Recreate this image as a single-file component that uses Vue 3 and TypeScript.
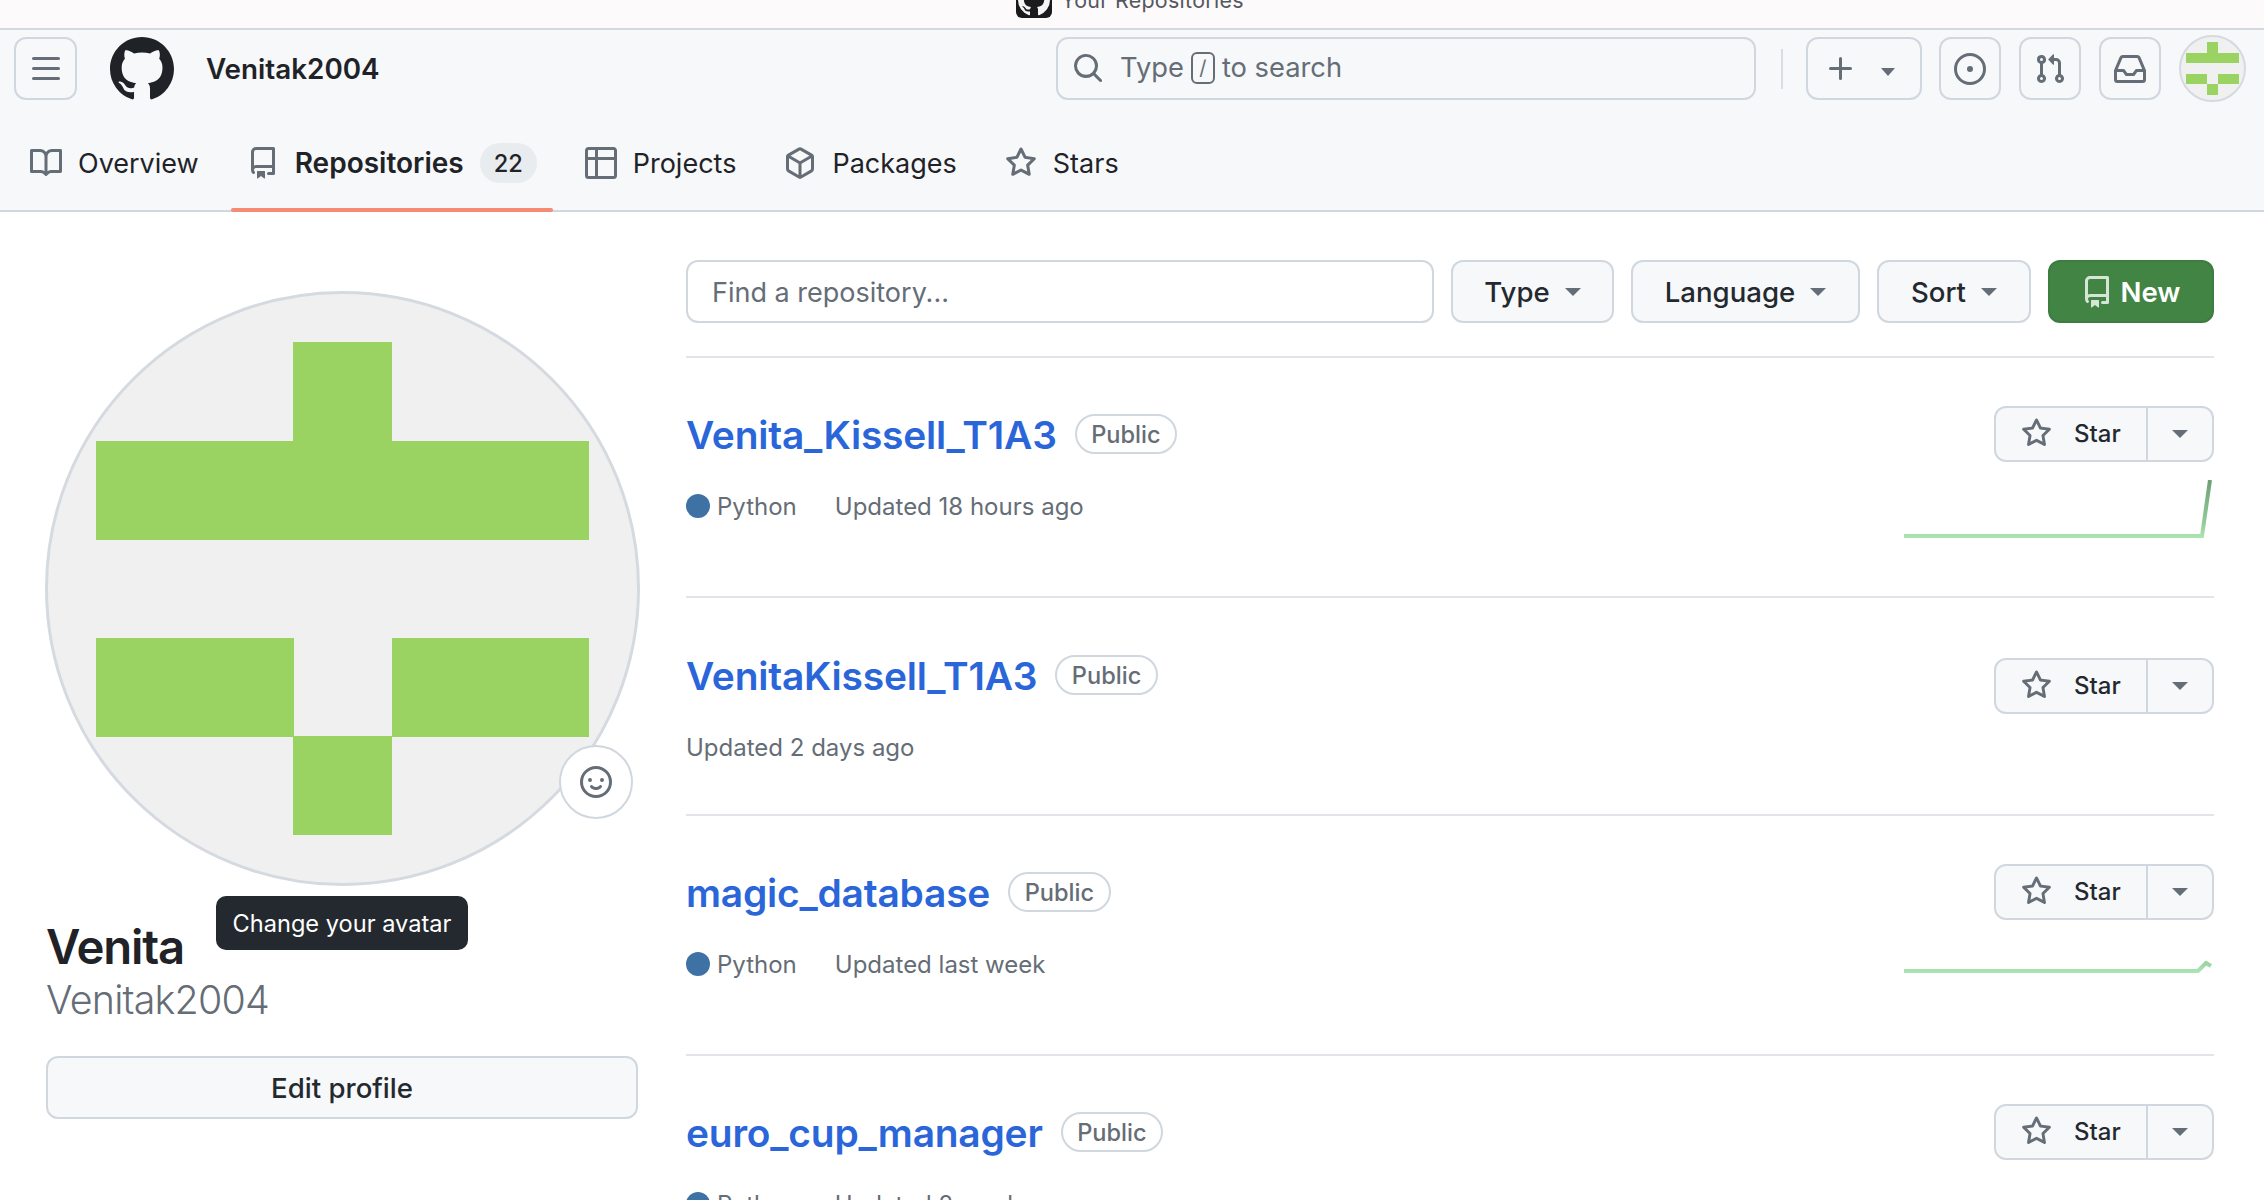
<script setup lang="ts">
const ic = {
  mark: 'M8 0c4.42 0 8 3.58 8 8a8.013 8.013 0 0 1-5.45 7.59c-.4.08-.55-.17-.55-.38 0-.27.01-1.13.01-2.2 0-.75-.25-1.23-.54-1.48 1.78-.2 3.65-.88 3.65-3.95 0-.88-.31-1.59-.82-2.15.08-.2.36-1.02-.08-2.12 0 0-.67-.22-2.2.82-.64-.18-1.32-.27-2-.27-.68 0-1.36.09-2 .27-1.53-1.03-2.2-.82-2.2-.82-.44 1.1-.16 1.92-.08 2.12-.51.56-.82 1.28-.82 2.15 0 3.06 1.86 3.75 3.64 3.95-.23.2-.44.55-.51 1.07-.46.21-1.61.55-2.33-.66-.15-.24-.6-.83-1.23-.82-.67.01-.27.38.01.53.34.19.73.9.82 1.13.16.45.68 1.31 2.69.94 0 .67.01 1.3.01 1.49 0 .21-.15.45-.55.38A7.995 7.995 0 0 1 0 8c0-4.42 3.58-8 8-8Z',
  book: 'M0 1.75A.75.75 0 0 1 .75 1h4.253c1.227 0 2.317.59 3 1.501A3.743 3.743 0 0 1 11.006 1h4.245a.75.75 0 0 1 .75.75v10.5a.75.75 0 0 1-.75.75h-4.507a2.25 2.25 0 0 0-1.591.659l-.622.621a.75.75 0 0 1-1.06 0l-.622-.621A2.25 2.25 0 0 0 5.258 13H.75a.75.75 0 0 1-.75-.75Zm7.251 10.324.004-5.073-.002-2.253A2.25 2.25 0 0 0 5.003 2.5H1.5v9h3.757a3.75 3.75 0 0 1 1.994.574ZM8.755 4.75l-.004 7.322a3.752 3.752 0 0 1 1.992-.572H14.5v-9h-3.495a2.25 2.25 0 0 0-2.25 2.25Z',
  repo: 'M2 2.5A2.5 2.5 0 0 1 4.5 0h8.75a.75.75 0 0 1 .75.75v12.5a.75.75 0 0 1-.75.75h-2.5a.75.75 0 0 1 0-1.5h1.75v-2h-8a1 1 0 0 0-.714 1.7.75.75 0 1 1-1.072 1.05A2.495 2.495 0 0 1 2 11.5Zm10.5-1h-8a1 1 0 0 0-1 1v6.708A2.486 2.486 0 0 1 4.5 9h8ZM5 12.25a.25.25 0 0 1 .25-.25h3.5a.25.25 0 0 1 .25.25v3.25a.25.25 0 0 1-.4.2l-1.45-1.087a.249.249 0 0 0-.3 0L5.4 15.7a.25.25 0 0 1-.4-.2Z',
  table: 'M0 1.75C0 .784.784 0 1.75 0h12.5C15.216 0 16 .784 16 1.75v12.5A1.75 1.75 0 0 1 14.25 16H1.75A1.75 1.75 0 0 1 0 14.25ZM6.5 6.5v8h7.75a.25.25 0 0 0 .25-.25V6.5Zm8-1.5V1.75a.25.25 0 0 0-.25-.25H6.5V5Zm-13 1.5v7.75c0 .138.112.25.25.25H5v-8ZM5 5V1.5H1.75a.25.25 0 0 0-.25.25V5Z',
  pkg: 'm8.878.392 5.25 3.045c.54.314.872.89.872 1.514v6.098a1.75 1.75 0 0 1-.872 1.514l-5.25 3.045a1.75 1.75 0 0 1-1.756 0l-5.25-3.045A1.75 1.75 0 0 1 1 11.049V4.951c0-.624.332-1.201.872-1.514L7.122.392a1.75 1.75 0 0 1 1.756 0ZM7.875 1.69l-4.63 2.685L8 7.133l4.755-2.758-4.63-2.685a.248.248 0 0 0-.25 0ZM2.5 5.677v5.372c0 .09.047.171.125.216l4.625 2.683V8.432Zm6.25 8.271 4.625-2.683a.25.25 0 0 0 .125-.216V5.677L8.75 8.432Z',
  star: 'M8 .25a.75.75 0 0 1 .673.418l1.882 3.815 4.21.612a.75.75 0 0 1 .416 1.279l-3.046 2.97.719 4.192a.751.751 0 0 1-1.088.791L8 12.347l-3.766 1.98a.75.75 0 0 1-1.088-.79l.72-4.194L.818 6.374a.75.75 0 0 1 .416-1.28l4.21-.611L7.327.668A.75.75 0 0 1 8 .25Zm0 2.445L6.615 5.5a.75.75 0 0 1-.564.41l-3.097.45 2.24 2.184a.75.75 0 0 1 .216.664l-.528 3.084 2.769-1.456a.75.75 0 0 1 .698 0l2.77 1.456-.53-3.084a.75.75 0 0 1 .216-.664l2.24-2.183-3.096-.45a.75.75 0 0 1-.564-.41L8 2.694Z',
  search: 'M10.68 11.74a6 6 0 0 1-7.922-8.982 6 6 0 0 1 8.982 7.922l3.04 3.04a.749.749 0 0 1-.326 1.275.749.749 0 0 1-.734-.215ZM11.5 7a4.499 4.499 0 1 0-8.997 0A4.499 4.499 0 0 0 11.5 7Z',
  bars: 'M1 2.75A.75.75 0 0 1 1.75 2h12.5a.75.75 0 0 1 0 1.5H1.75A.75.75 0 0 1 1 2.75Zm0 5A.75.75 0 0 1 1.75 7h12.5a.75.75 0 0 1 0 1.5H1.75A.75.75 0 0 1 1 7.75ZM1.75 12h12.5a.75.75 0 0 1 0 1.5H1.75a.75.75 0 0 1 0-1.5Z',
  plus: 'M7.75 2a.75.75 0 0 1 .75.75V7h4.25a.75.75 0 0 1 0 1.5H8.5v4.25a.75.75 0 0 1-1.5 0V8.5H2.75a.75.75 0 0 1 0-1.5H7V2.75A.75.75 0 0 1 7.75 2Z',
  issue: 'M8 9.5a1.5 1.5 0 1 0 0-3 1.5 1.5 0 0 0 0 3ZM8 0a8 8 0 1 1 0 16A8 8 0 0 1 8 0ZM1.5 8a6.5 6.5 0 1 0 13 0 6.5 6.5 0 0 0-13 0Z',
  pr: 'M1.5 3.25a2.25 2.25 0 1 1 3 2.122v5.256a2.251 2.251 0 1 1-1.5 0V5.372A2.25 2.25 0 0 1 1.5 3.25Zm5.677-.177L9.573.677A.25.25 0 0 1 10 .854V2.5h1A2.5 2.5 0 0 1 13.5 5v5.628a2.251 2.251 0 1 1-1.5 0V5a1 1 0 0 0-1-1h-1v1.646a.25.25 0 0 1-.427.177L7.177 3.427a.25.25 0 0 1 0-.354ZM3.75 2.5a.75.75 0 1 0 0 1.5.75.75 0 0 0 0-1.5Zm0 9.5a.75.75 0 1 0 0 1.5.75.75 0 0 0 0-1.5Zm8.25.75a.75.75 0 1 0 1.5 0 .75.75 0 0 0-1.5 0Z',
  inbox: 'M2.8 2.06A1.75 1.75 0 0 1 4.41 1h7.18c.7 0 1.333.417 1.61 1.06l2.74 6.395c.04.093.06.194.06.295v4.5A1.75 1.75 0 0 1 14.25 15H1.75A1.75 1.75 0 0 1 0 13.25v-4.5c0-.101.02-.202.06-.295Zm1.61.44a.25.25 0 0 0-.23.152L1.887 8H4.75a.75.75 0 0 1 .6.3L6.625 10h2.75l1.275-1.7a.75.75 0 0 1 .6-.3h2.863L11.82 2.652a.25.25 0 0 0-.23-.152Zm10.09 7h-2.875l-1.275 1.7a.75.75 0 0 1-.6.3h-3.5a.75.75 0 0 1-.6-.3L4.375 9.5H1.5v3.75c0 .138.112.25.25.25h12.5a.25.25 0 0 0 .25-.25Z',
  smiley: 'M8 0a8 8 0 1 1 0 16A8 8 0 0 1 8 0ZM1.5 8a6.5 6.5 0 1 0 13 0 6.5 6.5 0 0 0-13 0Zm3.82 1.636a.75.75 0 0 1 1.038.175l.007.009c.103.118.22.222.35.31.264.178.683.37 1.285.37.602 0 1.02-.192 1.285-.371.13-.088.247-.192.35-.31l.007-.008a.75.75 0 0 1 1.222.87l-.022-.015c.02.013.021.015.021.015v.001l-.001.002-.002.003-.005.007-.014.019a2.066 2.066 0 0 1-.184.213c-.16.166-.338.316-.53.445-.63.418-1.37.638-2.127.629-.946 0-1.652-.308-2.126-.63a3.331 3.331 0 0 1-.715-.657l-.014-.02-.005-.006-.002-.003v-.002h-.001l.613-.432-.614.43a.75.75 0 0 1 .183-1.044ZM12 7a1 1 0 1 1-2 0 1 1 0 0 1 2 0ZM5 8a1 1 0 1 1 0-2 1 1 0 0 1 0 2Zm5.25 2.25.592.416a97.71 97.71 0 0 0-.592-.416Z',
}

const tabs = [
  { label: 'Overview', icon: ic.book },
  { label: 'Repositories', icon: ic.repo, count: 22, active: true },
  { label: 'Projects', icon: ic.table },
  { label: 'Packages', icon: ic.pkg },
  { label: 'Stars', icon: ic.star },
]

const filters = [
  { label: 'Type', width: 163 },
  { label: 'Language', width: 229 },
  { label: 'Sort', width: 154 },
]

const cells = [
  [2, 0], [0, 1], [1, 1], [2, 1], [3, 1], [4, 1],
  [0, 3], [1, 3], [3, 3], [4, 3], [2, 4],
]

const repos = [
  { name: 'Venita_Kissell_T1A3', lang: 'Python', updated: 'Updated 18 hours ago', spark: '0,56 298,56 306,0', base: 58 },
  { name: 'VenitaKissell_T1A3', lang: '', updated: 'Updated 2 days ago', spark: '', base: 0 },
  { name: 'magic_database', lang: 'Python', updated: 'Updated last week', spark: '0,33 294,33 302,25 307,28', base: 35 },
  { name: 'euro_cup_manager', lang: 'Python', updated: 'Updated 2 weeks ago', spark: '', base: 0 },
]
</script>

<template>
  <div class="page">
    <div class="browser-tab">
      <div class="browser-tab-inner">
        <svg class="favicon" viewBox="0 0 36 36">
          <rect width="36" height="36" rx="6" fill="#1b1b1d" />
          <svg x="2" y="2" width="32" height="32" viewBox="0 0 16 16"><path :d="ic.mark" fill="#f5f5f5" /></svg>
        </svg>
        <span>Your Repositories</span>
      </div>
    </div>

    <header class="header">
      <div class="top-row">
        <div class="top-left">
          <button class="btn icon-btn burger">
            <svg class="icon" viewBox="0 0 16 16"><path :d="ic.bars" /></svg>
          </button>
          <svg class="logo" viewBox="0 0 16 16"><path :d="ic.mark" /></svg>
          <span class="crumb">Venitak2004</span>
        </div>
        <div class="search">
          <svg class="icon" viewBox="0 0 16 16"><path :d="ic.search" /></svg>
          <span>Type</span>
          <kbd>/</kbd>
          <span>to search</span>
        </div>
        <span class="vr"></span>
        <button class="btn icon-btn plus">
          <svg class="icon" viewBox="0 0 16 16"><path :d="ic.plus" /></svg>
          <i class="caret small"></i>
        </button>
        <button class="btn icon-btn action">
          <svg class="icon" viewBox="0 0 16 16"><path :d="ic.issue" /></svg>
        </button>
        <button class="btn icon-btn action">
          <svg class="icon" viewBox="0 0 16 16"><path :d="ic.pr" /></svg>
        </button>
        <button class="btn icon-btn action">
          <svg class="icon" viewBox="0 0 16 16"><path :d="ic.inbox" /></svg>
        </button>
        <div class="nav-avatar">
          <svg viewBox="-0.4925 -0.4925 5.985 5.985" shape-rendering="crispEdges">
            <rect v-for="(c, i) in cells" :key="i" :x="c[0]" :y="c[1]" width="1.005" height="1.005" fill="#9ad362" />
          </svg>
        </div>
      </div>
      <nav class="tabs">
        <a v-for="t in tabs" :key="t.label" class="tab" :class="{ active: t.active }">
          <svg class="icon" viewBox="0 0 16 16"><path :d="t.icon" /></svg>
          <span>{{ t.label }}</span>
          <span v-if="t.count" class="counter">{{ t.count }}</span>
        </a>
      </nav>
    </header>

    <main class="main">
      <aside class="sidebar">
        <div class="avatar-wrap">
          <div class="avatar">
            <svg viewBox="-0.4925 -0.4925 5.985 5.985" shape-rendering="crispEdges">
              <rect v-for="(c, i) in cells" :key="i" :x="c[0]" :y="c[1]" width="1.005" height="1.005" fill="#9ad362" />
            </svg>
          </div>
          <div class="smile">
            <svg class="icon" viewBox="0 0 16 16"><path :d="ic.smiley" /></svg>
          </div>
          <div class="tooltip">Change your avatar</div>
        </div>
        <h1 class="name">Venita</h1>
        <div class="login">Venitak2004</div>
        <button class="btn edit">Edit profile</button>
      </aside>

      <section class="content">
        <div class="filters">
          <div class="find">Find a repository...</div>
          <button v-for="f in filters" :key="f.label" class="btn filter" :style="{ width: f.width + 'px' }">
            {{ f.label }}<i class="caret"></i>
          </button>
          <button class="btn new">
            <svg class="icon" viewBox="0 0 16 16"><path :d="ic.repo" /></svg>New
          </button>
        </div>

        <article v-for="(r, idx) in repos" :key="r.name" class="repo" :class="{ bare: !r.lang }">
          <div class="repo-left">
            <div class="title-row">
              <a class="repo-name">{{ r.name }}</a>
              <span class="pill">Public</span>
            </div>
            <div class="meta">
              <template v-if="r.lang">
                <span class="dot"></span>
                <span class="lang">{{ r.lang }}</span>
              </template>
              <span>{{ r.updated }}</span>
            </div>
          </div>
          <div class="repo-right">
            <div class="star-group">
              <button class="star">
                <svg class="icon" viewBox="0 0 16 16"><path :d="ic.star" /></svg>
                <span>Star</span>
              </button>
              <button class="star-drop"><i class="caret"></i></button>
            </div>
            <svg v-if="r.spark" class="spark" viewBox="0 0 310 60" width="310" height="60">
              <defs>
                <linearGradient :id="'sg' + idx" gradientUnits="userSpaceOnUse" x1="0" :y1="r.base" x2="0" :y2="r.base - 58">
                  <stop offset="0" stop-color="#aee5b4" />
                  <stop offset="0.25" stop-color="#93cc9a" />
                  <stop offset="1" stop-color="#6d9f78" />
                </linearGradient>
              </defs>
              <polyline :points="r.spark" fill="none" :stroke="'url(#sg' + idx + ')'" stroke-width="4" />
            </svg>
          </div>
        </article>
      </section>
    </main>
  </div>
</template>

<style scoped>
.page {
  width: 2264px;
  height: 1200px;
  overflow: hidden;
  background: #fff;
  color: #1f2328;
  font-family: Inter, "Noto Sans", sans-serif;
}
.browser-tab {
  height: 28px;
  background: #fdfafc;
  border-bottom: 2px solid #d5d9df;
  box-sizing: content-box;
  overflow: hidden;
}
.browser-tab-inner {
  height: 36px;
  margin-top: -18px;
  padding-left: 1016px;
  display: flex;
  align-items: center;
  gap: 9px;
  font-size: 21.4px;
  color: #55585c;
  letter-spacing: 0.3px;
}
.favicon { width: 36px; height: 36px; flex: none; }
.icon { width: 32px; height: 32px; fill: #656d76; flex: none; }
.btn {
  box-sizing: border-box;
  height: 63px;
  background: #f6f8fa;
  border: 2px solid #d0d7de;
  border-radius: 12px;
  font-family: inherit;
  color: #24292f;
  padding: 0;
}
.icon-btn { display: flex; align-items: center; justify-content: center; flex: none; }
.caret {
  display: inline-block;
  width: 0;
  height: 0;
  border-left: 8px solid transparent;
  border-right: 8px solid transparent;
  border-top: 8px solid #656d76;
}
.header {
  background: #f6f8fa;
  border-bottom: 2px solid #d0d7de;
  height: 180px;
  box-sizing: content-box;
}
.top-row { display: flex; align-items: center; padding: 7px 0 0 14px; height: 63px; }
.top-left { width: 1042px; display: flex; align-items: center; flex: none; }
.burger { width: 63px; }
.logo { width: 64px; height: 64px; fill: #1f2328; margin-left: 33px; flex: none; }
.crumb { margin-left: 32px; font-size: 27.8px; font-weight: 600; }
.search {
  box-sizing: border-box;
  width: 700px;
  height: 63px;
  flex: none;
  border: 2px solid #d0d7de;
  border-radius: 12px;
  display: flex;
  align-items: center;
  padding-left: 14px;
  font-size: 27.3px;
  color: #656d76;
  line-height: 1;
  padding-bottom: 1px;
}
.search .icon { margin-right: 16px; }
.search kbd {
  box-sizing: border-box;
  width: 24px;
  height: 32px;
  border: 2px solid #656d76;
  border-radius: 6px;
  margin: 0 7px 0 7px;
  font: inherit;
  font-size: 20px;
  display: flex;
  align-items: center;
  justify-content: center;
}
.vr { width: 2px; height: 40px; background: #d8dde2; margin: 0 23px 0 25px; flex: none; }
.plus { width: 116px; gap: 24px; padding-right: 8px; }
.caret.small { border-left-width: 7px; border-right-width: 7px; border-top-width: 8px; margin-top: 6px; }
.action { width: 62px; margin-left: 18px; }
.plus + .action { margin-left: 17px; }
.nav-avatar {
  box-sizing: border-box;
  width: 67px;
  height: 67px;
  margin: -2px 0 -2px 18px;
  border-radius: 50%;
  background: #f0f0f0;
  border: 2px solid #d5dae0;
  overflow: hidden;
  flex: none;
}
.nav-avatar svg, .avatar svg { display: block; width: 100%; height: 100%; }
.tabs { display: flex; gap: 16px; padding: 31px 0 0 14px; }
.tab {
  display: flex;
  align-items: center;
  gap: 16px;
  height: 64px;
  padding: 0 16px;
  font-size: 27px;
  color: #1f2328;
  position: relative;
}
.tab.active { font-weight: 600; font-size: 28px; }
.tab.active::after {
  content: "";
  position: absolute;
  left: 0;
  right: 0;
  bottom: -17px;
  height: 4px;
  background: #f48b72;
  border-radius: 2px;
}
.counter {
  min-width: 57px;
  height: 40px;
  box-sizing: border-box;
  border-radius: 20px;
  background: #e9ecef;
  font-size: 23.6px;
  font-weight: 500;
  display: flex;
  align-items: center;
  justify-content: center;
  margin-left: 0;
}
.main { display: flex; }
.sidebar { width: 595px; margin-left: 45px; padding-top: 79px; flex: none; }
.avatar-wrap { position: relative; width: 595px; height: 594px; }
.avatar {
  box-sizing: border-box;
  width: 595px;
  height: 595px;
  border-radius: 50%;
  background: #f0f0f0;
  border: 3px solid #d5dae0;
  overflow: hidden;
}
.smile {
  position: absolute;
  left: 514px;
  top: 454px;
  box-sizing: border-box;
  width: 74px;
  height: 74px;
  border-radius: 50%;
  background: #fff;
  border: 2px solid #d0d7de;
  display: flex;
  align-items: center;
  justify-content: center;
}
.tooltip {
  position: absolute;
  left: 171px;
  top: 605px;
  width: 252px;
  height: 54px;
  border-radius: 10px;
  background: #24292f;
  color: #fff;
  font-size: 23.6px;
  display: flex;
  align-items: center;
  justify-content: center;
}
.name { margin: 34px 0 0 1px; font-size: 47.3px; font-weight: 600; line-height: 56px; letter-spacing: -1.2px; }
.login { margin-left: 1px; font-size: 39.4px; font-weight: 300; line-height: 50px; color: #656d76; letter-spacing: -0.8px; }
.edit { display: block; width: 592px; margin: 31px 0 0 1px; font-size: 27.6px; font-weight: 500; }
.content { width: 1528px; margin-left: 46px; flex: none; }
.filters {
  display: flex;
  gap: 17px;
  padding: 48px 0 33px;
  border-bottom: 2px solid #e1e4e8;
}
.find {
  box-sizing: border-box;
  flex: 1;
  height: 63px;
  border: 2px solid #d0d7de;
  border-radius: 12px;
  display: flex;
  align-items: center;
  padding: 2px 0 0 24px;
  font-size: 27px;
  color: #656d76;
}
.filter {
  display: flex;
  align-items: center;
  justify-content: center;
  gap: 15px;
  flex: none;
  font-size: 27.6px;
  font-weight: 500;
}
.new {
  display: flex;
  align-items: center;
  justify-content: center;
  gap: 7px;
  width: 166px;
  flex: none;
  background: #418444;
  border-color: #3d7d41;
  color: #fff;
  font-size: 27.6px;
  font-weight: 600;
}
.new .icon { fill: #d5e6d6; }
.repo {
  display: flex;
  justify-content: space-between;
  align-items: flex-start;
  padding: 48px 0 56px;
  border-bottom: 2px solid #e1e4e8;
}
.repo.bare { padding: 49px 0 50px; }
.title-row { display: flex; align-items: center; height: 56px; }
.repo-name { font-size: 38.9px; font-weight: 600; color: #2a66d9; letter-spacing: -0.2px; }
.pill {
  box-sizing: border-box;
  height: 40px;
  margin-left: 18px;
  padding: 0 14.5px;
  border: 2px solid #d0d7de;
  border-radius: 20px;
  color: #656d76;
  font-size: 23.6px;
  font-weight: 500;
  display: flex;
  align-items: center;
}
.meta {
  display: flex;
  align-items: center;
  height: 34px;
  margin-top: 27px;
  font-size: 24px;
  color: #656d76;
}
.dot { width: 24px; height: 24px; border-radius: 50%; background: #3f72a4; margin-right: 7px; }
.lang { margin-right: 38px; }
.repo-right { width: 310px; display: flex; flex-direction: column; align-items: flex-end; }
.bare .repo-right { padding-top: 11px; }
.star-group { display: flex; }
.star, .star-drop {
  box-sizing: border-box;
  height: 56px;
  background: #f6f8fa;
  border: 2px solid #d0d7de;
  font-family: inherit;
  color: #24292f;
  display: flex;
  align-items: center;
  padding: 0 0 1px;
}
.star {
  width: 154px;
  padding-left: 25px;
  gap: 22px;
  border-radius: 12px 0 0 12px;
  font-size: 24px;
  font-weight: 500;
}
.star .icon { width: 31px; height: 31px; }
.star-drop {
  width: 66px;
  border-left: 0;
  border-radius: 0 12px 12px 0;
  justify-content: center;
}
.spark { display: block; margin-top: 18px; }
</style>

<style>
html, body { margin: 0; padding: 0; overflow: hidden; background: #fff; }
</style>
